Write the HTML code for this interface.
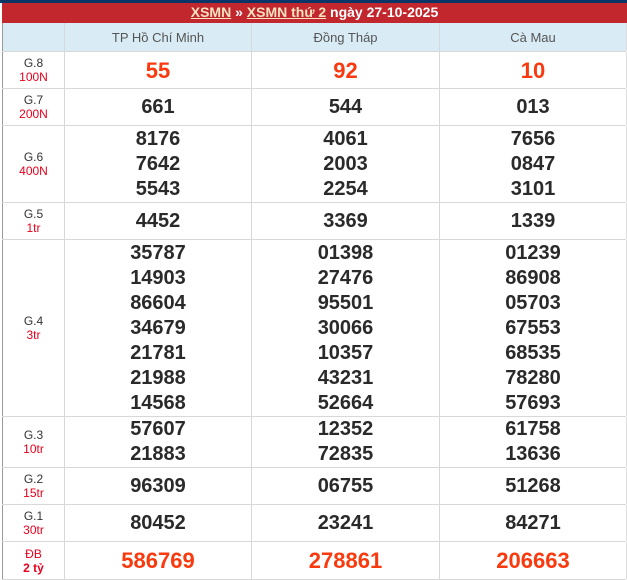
<!DOCTYPE html>
<html><head><meta charset="utf-8"><style>
*{margin:0;padding:0;box-sizing:border-box}
body{width:627px;height:579px;overflow:hidden;background:#fff;font-family:"Liberation Sans",Arial,sans-serif;position:relative}
.top{position:absolute;left:0;top:0;width:627px;height:3px;background:#0a3566}
.hd{position:absolute;left:2px;top:3px;width:625px;height:20px;background:#c1272d;color:#fff;font-weight:bold;font-size:14px;line-height:18px;text-align:center}
.hd a{color:#f7e3c0;text-decoration:underline}
.row{position:absolute;left:2px;width:624px;border-bottom:1px solid #d8d8d8}
.c{position:absolute;top:0;bottom:0;display:flex;flex-direction:column;justify-content:center;align-items:center;border-right:1px solid #d8d8d8}
.c0{left:0;width:63px;border-left:1px solid #999}
.c1{left:63px;width:187px}
.c2{left:250px;width:188px}
.c3{left:438px;width:187px;border-right:1px solid #ddd}
.lab{font-size:12px;line-height:14px;color:#333;text-align:center}
.lab span{color:#e8001c;display:block}
.n{font-size:20px;font-weight:bold;color:#2a2a2a;line-height:25px}
.r{font-size:22px;color:#fa3a0e}
.h{background:#d9ecf5;color:#555;font-size:13px}
</style></head><body>
<div class="top"></div>
<div class="hd"><a>XSMN</a> » <a>XSMN thứ 2</a> ngày 27-10-2025</div>

<div class="row" style="top:23px;height:29px">
<div class="c c0 h"></div><div class="c c1 h">TP Hồ Chí Minh</div><div class="c c2 h">Đồng Tháp</div><div class="c c3 h">Cà Mau</div></div>

<div class="row" style="top:52px;height:37px">
<div class="c c0 lab">G.8<span>100N</span></div><div class="c c1 n r">55</div><div class="c c2 n r">92</div><div class="c c3 n r">10</div></div>

<div class="row" style="top:89px;height:37px">
<div class="c c0 lab">G.7<span>200N</span></div><div class="c c1 n">661</div><div class="c c2 n">544</div><div class="c c3 n">013</div></div>

<div class="row" style="top:126px;height:77px">
<div class="c c0 lab">G.6<span>400N</span></div><div class="c c1 n"><div>8176</div><div>7642</div><div>5543</div></div><div class="c c2 n"><div>4061</div><div>2003</div><div>2254</div></div><div class="c c3 n"><div>7656</div><div>0847</div><div>3101</div></div></div>

<div class="row" style="top:203px;height:37px">
<div class="c c0 lab">G.5<span>1tr</span></div><div class="c c1 n">4452</div><div class="c c2 n">3369</div><div class="c c3 n">1339</div></div>

<div class="row" style="top:240px;height:177px">
<div class="c c0 lab">G.4<span>3tr</span></div>
<div class="c c1 n"><div>35787</div><div>14903</div><div>86604</div><div>34679</div><div>21781</div><div>21988</div><div>14568</div></div>
<div class="c c2 n"><div>01398</div><div>27476</div><div>95501</div><div>30066</div><div>10357</div><div>43231</div><div>52664</div></div>
<div class="c c3 n"><div>01239</div><div>86908</div><div>05703</div><div>67553</div><div>68535</div><div>78280</div><div>57693</div></div></div>

<div class="row" style="top:417px;height:51px">
<div class="c c0 lab">G.3<span>10tr</span></div><div class="c c1 n"><div>57607</div><div>21883</div></div><div class="c c2 n"><div>12352</div><div>72835</div></div><div class="c c3 n"><div>61758</div><div>13636</div></div></div>

<div class="row" style="top:468px;height:37px">
<div class="c c0 lab">G.2<span>15tr</span></div><div class="c c1 n">96309</div><div class="c c2 n">06755</div><div class="c c3 n">51268</div></div>

<div class="row" style="top:505px;height:37px">
<div class="c c0 lab">G.1<span>30tr</span></div><div class="c c1 n">80452</div><div class="c c2 n">23241</div><div class="c c3 n">84271</div></div>

<div class="row" style="top:542px;height:38px">
<div class="c c0 lab"><span>ĐB</span><span style="font-weight:bold">2 tỷ</span></div><div class="c c1 n r">586769</div><div class="c c2 n r">278861</div><div class="c c3 n r">206663</div></div>
</body></html>
